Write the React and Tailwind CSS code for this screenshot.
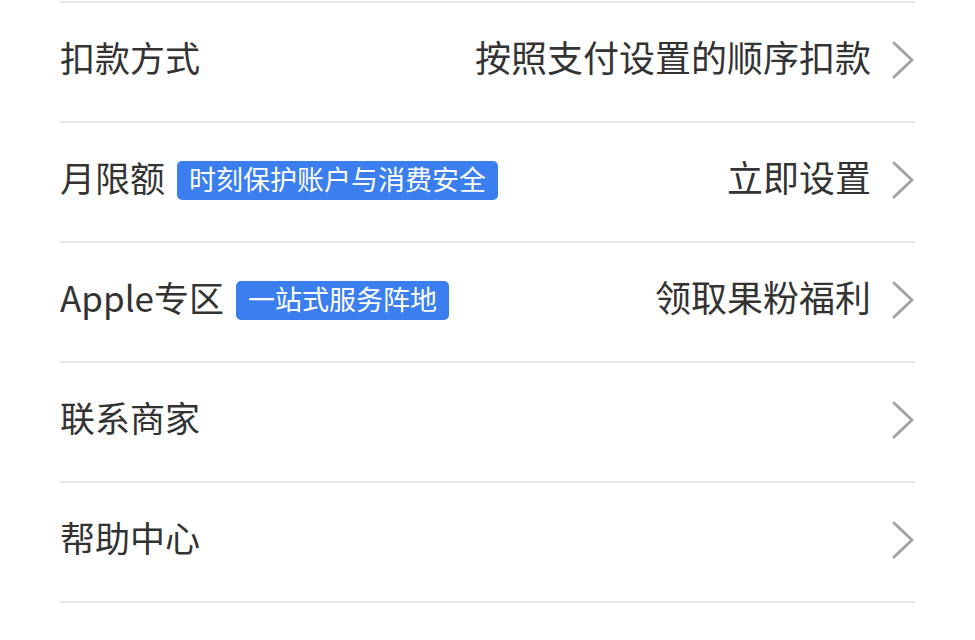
import React from 'react';

const rows = [
  { label: '扣款方式', value: '按照支付设置的顺序扣款' },
  { label: '月限额', badge: '时刻保护账户与消费安全', value: '立即设置' },
  { label: 'Apple专区', badge: '一站式服务阵地', value: '领取果粉福利' },
  { label: '联系商家' },
  { label: '帮助中心' },
];

const Chevron = () => (
  <svg width="24" height="38" viewBox="0 0 24 38" className="shrink-0">
    <path d="M3 2 L21 19 L3 36" fill="none" stroke="#a3a3a3" strokeWidth="3" strokeLinecap="round" strokeLinejoin="round" />
  </svg>
);

const App = () => {
  return (
    <div
      className="min-h-[640px] bg-white pt-[1px] pl-[60px] text-[#333333]"
      style={{ fontFamily: '"Noto Sans CJK SC", "Noto Sans", sans-serif' }}
    >
      <div className="w-[855px] border-t-2 border-[#e9e9e9]">
        {rows.map((row) => (
          <div key={row.label} className="flex h-[120px] items-center border-b-2 border-[#e9e9e9] pb-[4px]">
            <span className="mb-[8px] text-[35px] leading-none">{row.label}</span>
            {row.badge && (
              <span className="ml-[12px] flex h-[39px] items-center rounded-[5px] bg-[#3b7ef0] px-[12px] text-[27px] leading-none text-white">
                <span className="mb-[4px]">{row.badge}</span>
              </span>
            )}
            <div className="ml-auto flex items-center gap-[20px]">
              {row.value && <span className="mb-[8px] text-[36px] leading-none">{row.value}</span>}
              <Chevron />
            </div>
          </div>
        ))}
      </div>
    </div>
  );
};

export default App;
